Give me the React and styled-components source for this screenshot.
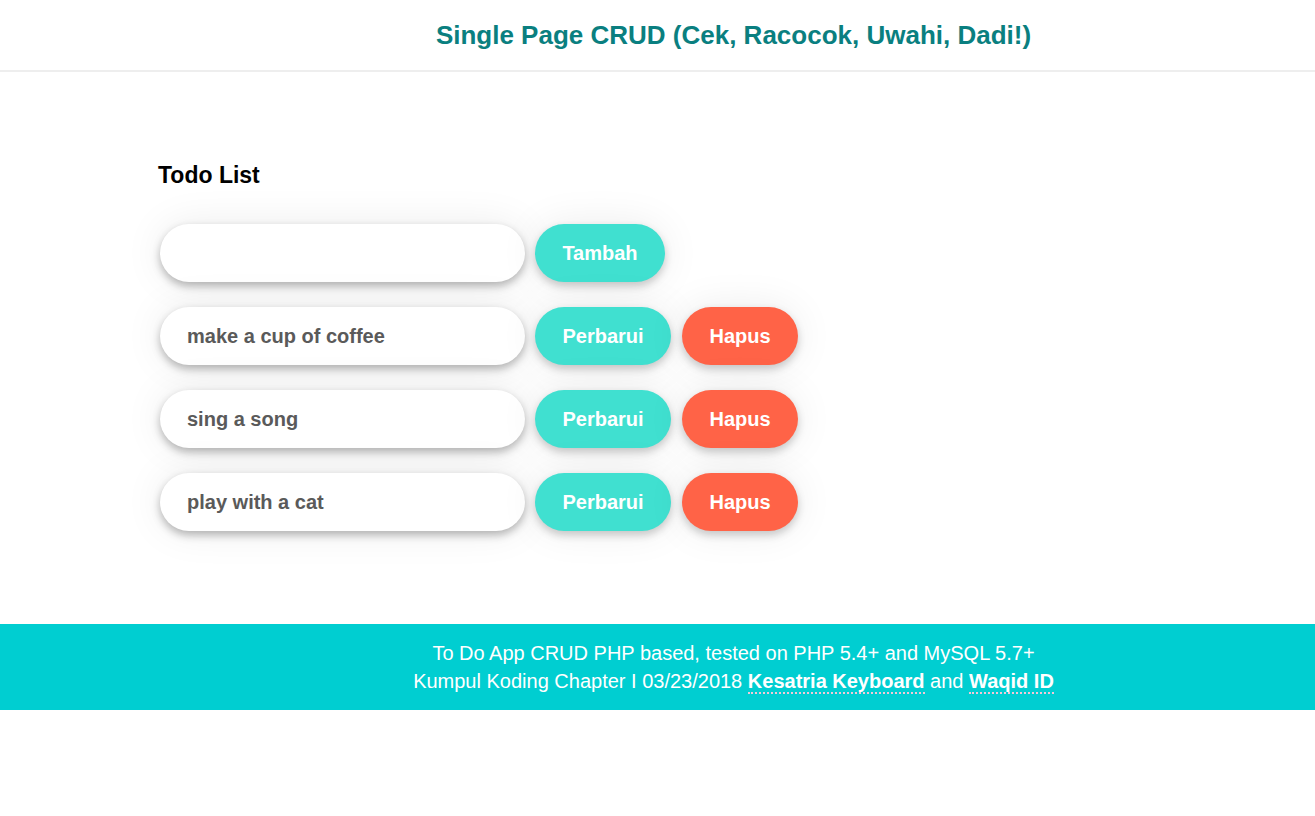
import React, { useState } from "react";
import styled, { createGlobalStyle } from "styled-components";

const GlobalStyle = createGlobalStyle`
  body {
    margin: 0;
    font-family: "Liberation Sans", Arial, sans-serif;
    background: #fff;
  }
`;

const Header = styled.header`
  height: 70px;
  border-bottom: 2px solid #eeeeee;
  display: flex;
  align-items: center;
  justify-content: center;
  padding-left: 152px;
`;

const Title = styled.h1`
  margin: 0;
  font-size: 26px;
  font-weight: 700;
  color: #0a7f80;
`;

const Main = styled.main`
  padding: 90px 0 93px 160px;
`;

const Heading = styled.h2`
  margin: 0 0 35px -2px;
  font-size: 23px;
  font-weight: 700;
  color: #000;
`;

const List = styled.div`
  display: flex;
  flex-direction: column;
  gap: 25px;
`;

const Row = styled.div`
  display: flex;
  align-items: center;
  gap: 10px;
`;

const Field = styled.input`
  box-sizing: border-box;
  width: 365px;
  height: 58px;
  border: none;
  border-radius: 29px;
  padding: 0 27px;
  font-family: "Liberation Sans", Arial, sans-serif;
  font-size: 20px;
  font-weight: 700;
  color: #5a5a5a;
  background: #fff;
  outline: none;
  box-shadow: 0 4px 8px rgba(0, 0, 0, 0.28), 0 0 40px rgba(0, 0, 0, 0.08);
`;

const Button = styled.button`
  box-sizing: border-box;
  height: 58px;
  width: ${(p) => p.$w}px;
  padding: 0;
  border: none;
  border-radius: 29px;
  font-family: "Liberation Sans", Arial, sans-serif;
  font-size: 20px;
  font-weight: 700;
  color: #fff;
  background: ${(p) => (p.$danger ? "#ff6347" : "#40e0d0")};
  box-shadow: 0 4px 8px rgba(0, 0, 0, 0.2), 0 0 40px rgba(0, 0, 0, 0.08);
  cursor: pointer;
  margin-left: ${(p) => (p.$danger ? 1 : 0)}px;
`;

const Footer = styled.footer`
  background: #00ced1;
  color: #fff;
  padding: 15px 0 15px 152px;
  text-align: center;
  font-size: 20px;
  line-height: 28px;
`;

const Link = styled.a`
  color: #fff;
  font-weight: 700;
  text-decoration: none;
  border-bottom: 2px dotted #f4c8d8;
`;

const todos = ["make a cup of coffee", "sing a song", "play with a cat"];

export default function App() {
  const [value, setValue] = useState("");
  return (
    <>
      <GlobalStyle />
      <Header>
        <Title>Single Page CRUD (Cek, Racocok, Uwahi, Dadi!)</Title>
      </Header>
      <Main>
        <Heading>Todo List</Heading>
        <List>
          <Row>
            <Field value={value} onChange={(e) => setValue(e.target.value)} />
            <Button $w={130}>Tambah</Button>
          </Row>
          {todos.map((t) => (
            <Row key={t}>
              <Field defaultValue={t} />
              <Button $w={136}>Perbarui</Button>
              <Button $danger $w={116}>Hapus</Button>
            </Row>
          ))}
        </List>
      </Main>
      <Footer>
        To Do App CRUD PHP based, tested on PHP 5.4+ and MySQL 5.7+
        <br />
        Kumpul Koding Chapter I 03/23/2018 <Link href="#">Kesatria Keyboard</Link> and{" "}
        <Link href="#">Waqid ID</Link>
      </Footer>
    </>
  );
}
